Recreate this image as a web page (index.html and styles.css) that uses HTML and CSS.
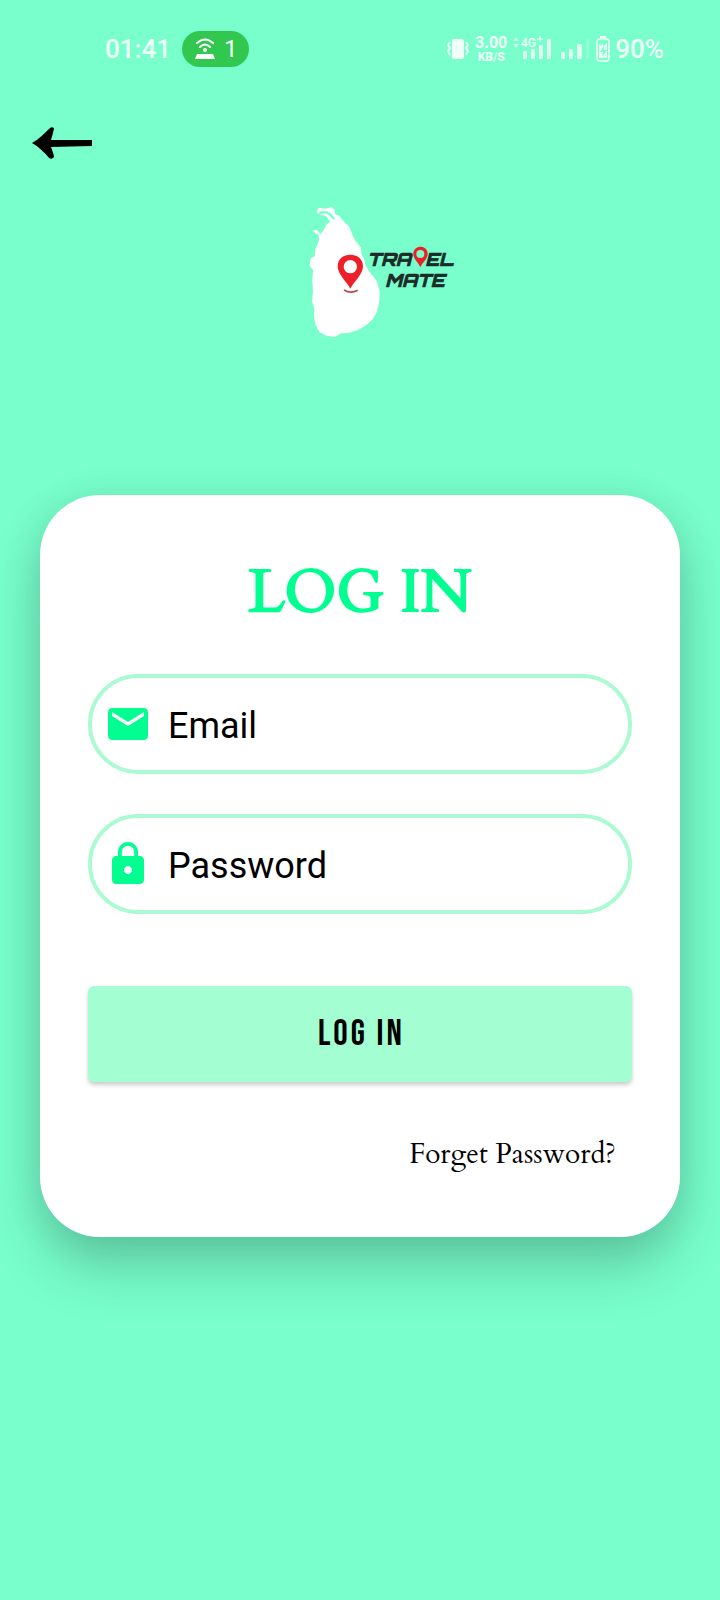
FILE: index.html
```html
<!DOCTYPE html>
<html lang="en">
<head>
<meta charset="utf-8">
<meta name="viewport" content="width=device-width, initial-scale=1">
<title>Travel Mate - Log in</title>
<link rel="stylesheet" href="styles.css">
</head>
<body>
<div class="status">
  <div class="status-group">
    <span class="clock">01:41</span>
    <span class="hotspot">
      <svg width="22" height="24" viewBox="0 0 22 24" aria-hidden="true">
        <g fill="none" stroke="#fff" stroke-width="2" stroke-linecap="round">
          <path d="M3 6Q11-1 19 6"/><path d="M6 10Q11 5 16 10"/>
        </g>
        <circle cx="11" cy="13" r="2" fill="#fff"/>
        <path d="M3 17H19L21 22H1Z" fill="#fff"/>
      </svg>
      <span>1</span>
    </span>
  </div>
  <div class="status-group status-right">
    <svg width="22" height="24" viewBox="0 0 22 24" aria-hidden="true">
      <rect x="5" y="2" width="12" height="20" rx="2" fill="#effff8"/>
      <path d="M3 5L1 8L3 11L1 14L3 18M19 5L21 8L19 11L21 14L19 18" fill="none" stroke="#effff8" stroke-width="2"/>
    </svg>
    <span class="speed"><b>3.00</b><small>KB/S</small></span>
    <svg class="signal" width="76" height="32" viewBox="0 0 76 32" aria-hidden="true">
      <g fill="#dcfff2">
        <path d="M0 8L3 4L6 8ZM0 11L3 15L6 11Z" opacity=".8"/>
        <rect x="10" y="18" width="4" height="8" rx="1"/><rect x="18" y="16" width="4" height="10" rx="1"/>
        <rect x="26" y="12" width="4" height="14" rx="1"/><rect x="34" y="6" width="4" height="20" rx="1"/>
        <rect x="48" y="19" width="4" height="7" rx="1"/><rect x="56" y="16" width="4" height="10" rx="1"/>
        <rect x="64" y="11" width="5" height="15" rx="1"/><rect x="73" y="6" width="3" height="20" opacity=".2"/>
      </g>
      <text x="8" y="14">4G</text>
      <path d="M24 6H30M27 3V9" stroke="#effff8" stroke-width="1"/>
    </svg>
    <svg width="16" height="28" viewBox="0 0 16 28" aria-hidden="true">
      <path d="M5 2H11" stroke="#effff8" stroke-width="2"/>
      <rect x="2" y="4" width="12" height="22" rx="3" fill="none" stroke="#effff8" stroke-width="1.500"/>
      <path d="M4 9L6 11L7 8L9 11L12 8V23H4Z" fill="#effff8"/>
      <path d="M9 11L5 17H8L7 22L12 15H9Z" fill="#78ffcc"/>
    </svg>
    <span class="charge">90%</span>
  </div>
</div>

<header class="top">
  <button class="back" type="button" aria-label="Back">
    <svg width="64" height="36" viewBox="0 0 64 36" aria-hidden="true">
      <path d="M2 18C9 14 15 8 19 4Q21 1 24 3Q24 5 21 15L62 15V21L21 22Q24 30 24 32Q22 35 19 33C15 28 9 22 2 18Z"/>
    </svg>
  </button>
</header>

<main class="main">
  <svg class="logo" width="200" height="150" viewBox="-120 0 600 450" role="img" aria-label="Travel Mate">
    <path fill="#fff" d="M50 49L57 38L76 41L95 36L104 44L105 57L118 63L132 80L148 95L157 119L166 137L183 158L184 178L191 188L198 214L209 232L229 255L239 288L238 318L231 350L218 373L198 391L174 405L148 413L124 415L104 426L80 422L58 411L47 390L42 364L43 341L36 319L39 290L37 258L39 225L29 213L32 190L44 184L47 159L57 139L56 121L37 107L49 104L62 116L72 104L80 88L91 80L78 63L58 58L74 54L86 59L98 73L106 74L96 58L81 49L61 49L54 58Z"/>
    <path fill="#ed2029" fill-rule="evenodd" d="M151 281C142 262 113 239 113 214C113 168 189 168 189 214C189 239 160 262 151 281ZM151 195A20 20 0 1 0 151 235A20 20 0 1 0 151 195Z"/>
    <path d="M132 285Q152 297 173 286" fill="none" stroke="#b94755" stroke-width="5"/>
    <text class="brand" x="202" y="213">TRA</text>
    <text class="brand" x="376" y="213">EL</text>
    <text class="brand" x="256" y="277">MATE</text>
    <path fill="#ed2029" fill-rule="evenodd" d="M361 217C356 203 340 193 340 176C340 148 383 148 383 176C383 193 366 203 361 217ZM361 165A12 12 0 1 0 361 189A12 12 0 1 0 361 165Z"/>
  </svg>

  <form class="card">
    <h1 class="title">LOG IN</h1>
    <label class="field">
      <svg width="48" height="48" viewBox="0 0 24 24" aria-hidden="true"><path d="M20 4H4c-1.100 0-1.990.9-1.990 2L2 18c0 1.100.9 2 2 2h16c1.100 0 2-.9 2-2V6c0-1.100-.9-2-2-2zm0 4l-8 5-8-5V6l8 5 8-5v2z"/></svg>
      <input type="email" placeholder="Email" aria-label="Email">
    </label>
    <label class="field">
      <svg width="48" height="48" viewBox="0 0 24 24" aria-hidden="true"><path d="M18 8h-1V6c0-2.760-2.240-5-5-5S7 3.240 7 6v2H6c-1.100 0-2 .9-2 2v10c0 1.100.9 2 2 2h12c1.100 0 2-.9 2-2V10c0-1.100-.9-2-2-2zm-6 9c-1.100 0-2-.9-2-2s.9-2 2-2 2 .9 2 2-.9 2-2 2zm3.100-9H8.900V6c0-1.710 1.390-3.100 3.100-3.100s3.100 1.390 3.100 3.100v2z"/></svg>
      <input type="password" placeholder="Password" aria-label="Password">
    </label>
    <button class="submit" type="submit">LOG IN</button>
    <a class="forgot" href="#">Forget Password?</a>
  </form>
</main>
</body>
</html>
```

FILE: styles.css
```css
* {
  box-sizing: border-box;
}

body {
  margin: 0;
  min-height: 100vh;
  background: #78ffcc;
  color: #000;
  font-family: Roboto, "Liberation Sans", sans-serif;
}

svg {
  display: block;
  flex: none;
}

.status {
  display: flex;
  justify-content: space-between;
  height: 98px;
  padding: 0 56px 0 105px;
  color: #effff8;
  font-size: 26px;
  line-height: 32px;
}

.status-group {
  display: flex;
  align-items: center;
  gap: 11px;
}

.clock,
.charge {
  font-weight: 500;
}

.status-right {
  gap: 6px;
}

.hotspot {
  display: flex;
  align-items: center;
  gap: 8px;
  height: 36px;
  padding: 0 12px;
  border-radius: 18px;
  background: #32c850;
  font-size: 24px;
}

.speed {
  display: flex;
  flex-direction: column;
  align-items: center;
  font-size: 16px;
  line-height: 16px;
}

.speed b {
  font-weight: 700;
}

.speed small {
  font-size: 12px;
  font-weight: 700;
  line-height: 12px;
}

.signal text {
  fill: #effff8;
  font-size: 12px;
  font-weight: 500;
}

.charge {
  margin-left: -2px;
}

.top {
  padding: 27px 30px 0;
}

.back {
  display: block;
  padding: 0;
  border: 0;
  background: none;
  cursor: pointer;
}

.main {
  display: flex;
  flex-direction: column;
  align-items: center;
  gap: 150px;
  padding: 34px 40px 80px;
}

.logo {
  overflow: visible;
}

.brand {
  fill: #1c2b28;
  stroke: #1c2b28;
  stroke-width: 2px;
  font-family: Orbitron, "Liberation Sans", sans-serif;
  font-size: 54px;
  font-style: italic;
  font-weight: 800;
}

.card {
  display: flex;
  flex-direction: column;
  width: 100%;
  padding: 60px 48px;
  border-radius: 60px;
  background: #fff;
  box-shadow: 0 32px 56px rgba(0, 0, 0, 0.18), 0 6px 40px rgba(0, 0, 0, 0.1);
}

.title {
  margin: 0 0 43px;
  color: #00ff90;
  font-family: Cardo, "EB Garamond", "Liberation Serif", serif;
  font-size: 60px;
  font-weight: 400;
  line-height: 76px;
  text-align: center;
  -webkit-text-stroke: 2px #00ff90;
}

.field {
  display: flex;
  align-items: center;
  gap: 16px;
  height: 100px;
  margin-bottom: 40px;
  padding: 0 12px;
  border: 4px solid #aafad2;
  border-radius: 50px;
  fill: #00ff90;
}

.field input {
  flex: 1;
  min-width: 0;
  height: 56px;
  padding: 4px 0 0;
  border: 0;
  outline: 0;
  background: none;
  color: #000;
  font: 36px Roboto, "Liberation Sans", sans-serif;
}

.field input::placeholder {
  color: #000;
  opacity: 1;
}

.submit {
  height: 96px;
  margin-top: 32px;
  padding: 0 0 0 3px;
  border: 0;
  border-radius: 6px;
  background: #a3ffd1;
  box-shadow: 0 3px 4px rgba(0, 0, 0, 0.2);
  color: #000;
  font: 400 36px "Bebas Neue", "Liberation Sans Narrow", sans-serif;
  letter-spacing: 3px;
  cursor: pointer;
}

.forgot {
  align-self: flex-end;
  margin: 54px 16px 5px;
  color: #000;
  font-family: Cardo, "EB Garamond", "Liberation Serif", serif;
  font-size: 28px;
  line-height: 36px;
  text-decoration: none;
}
```
